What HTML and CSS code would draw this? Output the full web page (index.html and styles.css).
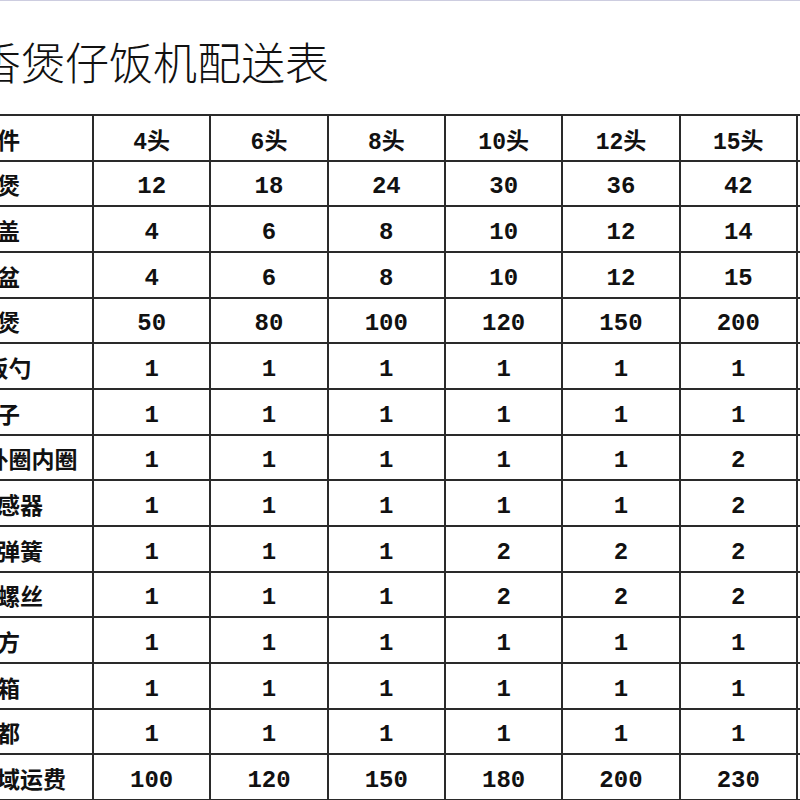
FILE: index.html
```html
<!DOCTYPE html>
<html lang="zh-CN">
<head>
<meta charset="utf-8">
<title>稻香煲仔饭机配送表</title>
<link rel="stylesheet" href="styles.css">
</head>
<body>
<div class="page">
  <h1 class="title">稻香煲仔饭机配送表</h1>
  <div class="grid">
    <div class="cell">零配件</div><div class="cell">4头</div><div class="cell">6头</div><div class="cell">8头</div><div class="cell">10头</div><div class="cell">12头</div><div class="cell">15头</div><div class="cell">20头</div>
    <div class="cell">砂锅煲</div><div class="cell num">12</div><div class="cell num">18</div><div class="cell num">24</div><div class="cell num">30</div><div class="cell num">36</div><div class="cell num">42</div><div class="cell num">56</div>
    <div class="cell">砂锅盖</div><div class="cell num">4</div><div class="cell num">6</div><div class="cell num">8</div><div class="cell num">10</div><div class="cell num">12</div><div class="cell num">14</div><div class="cell num">20</div>
    <div class="cell">接水盆</div><div class="cell num">4</div><div class="cell num">6</div><div class="cell num">8</div><div class="cell num">10</div><div class="cell num">12</div><div class="cell num">15</div><div class="cell num">20</div>
    <div class="cell">锡纸煲</div><div class="cell num">50</div><div class="cell num">80</div><div class="cell num">100</div><div class="cell num">120</div><div class="cell num">150</div><div class="cell num">200</div><div class="cell num">250</div>
    <div class="cell">专用饭勺</div><div class="cell num">1</div><div class="cell num">1</div><div class="cell num">1</div><div class="cell num">1</div><div class="cell num">1</div><div class="cell num">1</div><div class="cell num">1</div>
    <div class="cell">锅夹子</div><div class="cell num">1</div><div class="cell num">1</div><div class="cell num">1</div><div class="cell num">1</div><div class="cell num">1</div><div class="cell num">1</div><div class="cell num">1</div>
    <div class="cell">发热底盘外圈内圈</div><div class="cell num">1</div><div class="cell num">1</div><div class="cell num">1</div><div class="cell num">1</div><div class="cell num">1</div><div class="cell num">2</div><div class="cell num">2</div>
    <div class="cell">温度传感器</div><div class="cell num">1</div><div class="cell num">1</div><div class="cell num">1</div><div class="cell num">1</div><div class="cell num">1</div><div class="cell num">2</div><div class="cell num">2</div>
    <div class="cell">加热盘弹簧</div><div class="cell num">1</div><div class="cell num">1</div><div class="cell num">1</div><div class="cell num">2</div><div class="cell num">2</div><div class="cell num">2</div><div class="cell num">3</div>
    <div class="cell">固定用螺丝</div><div class="cell num">1</div><div class="cell num">1</div><div class="cell num">1</div><div class="cell num">2</div><div class="cell num">2</div><div class="cell num">2</div><div class="cell num">3</div>
    <div class="cell">调酱方</div><div class="cell num">1</div><div class="cell num">1</div><div class="cell num">1</div><div class="cell num">1</div><div class="cell num">1</div><div class="cell num">1</div><div class="cell num">1</div>
    <div class="cell">包装箱</div><div class="cell num">1</div><div class="cell num">1</div><div class="cell num">1</div><div class="cell num">1</div><div class="cell num">1</div><div class="cell num">1</div><div class="cell num">1</div>
    <div class="cell">至成都</div><div class="cell num">1</div><div class="cell num">1</div><div class="cell num">1</div><div class="cell num">1</div><div class="cell num">1</div><div class="cell num">1</div><div class="cell num">1</div>
    <div class="cell">珠三角区域运费</div><div class="cell num">100</div><div class="cell num">120</div><div class="cell num">150</div><div class="cell num">180</div><div class="cell num">200</div><div class="cell num">230</div><div class="cell num">260</div>
  </div>
</div>
</body>
</html>
```

FILE: styles.css
```css
html, body {
  margin: 0;
  padding: 0;
  background: #ffffff;
  overflow: hidden;
}

.page {
  border-top: 1px solid #cdcde0;
  margin-left: -123px;
  width: 1200px;
}

.title {
  margin: 0 0 31px 0;
  padding: 38px 0 0 56px;
  height: 44px;
  font-family: "Noto Sans CJK SC", sans-serif;
  font-weight: 300;
  font-size: 44px;
  line-height: 44px;
  color: #111111;
  white-space: nowrap;
}

.grid {
  display: grid;
  grid-template-columns: 213px repeat(7, 115.333px);
  grid-auto-rows: 43.667px;
  gap: 2px;
  width: max-content;
  background: #2a2a2a;
  border: 2px solid #2a2a2a;
}

.cell {
  display: flex;
  align-items: center;
  justify-content: center;
  box-sizing: border-box;
  padding-top: 2px;
  background: #ffffff;
  color: #111111;
  font-family: "Liberation Mono", "Noto Sans CJK SC", monospace;
  font-weight: 700;
  font-size: 23px;
  white-space: nowrap;
  overflow: hidden;
}

.num {
  padding-top: 7px;
  font-size: 24px;
}
```
